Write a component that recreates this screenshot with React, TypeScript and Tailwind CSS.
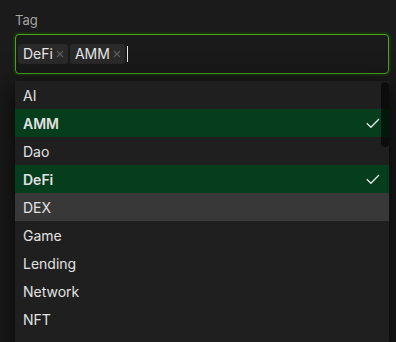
import { useState } from 'react';

const OPTIONS = ['AI', 'AMM', 'Dao', 'DeFi', 'DEX', 'Game', 'Lending', 'Network', 'NFT'];

function CloseIcon() {
  return (
    <svg width="8" height="8" viewBox="0 0 8 8" className="ml-[3px]">
      <path d="M1 1L7 7M7 1L1 7" stroke="#5e5e5e" strokeWidth="1.1" />
    </svg>
  );
}

function CheckIcon() {
  return (
    <svg width="14" height="11" viewBox="0 0 14 11">
      <path d="M0.8 5.2L4.9 9.3L13 1" fill="none" stroke="#e4e4e4" strokeWidth="1.3" />
    </svg>
  );
}

export default function App() {
  const [selected] = useState<string[]>(['DeFi', 'AMM']);
  const active = 'DEX';

  return (
    <div className="h-[342px] w-[396px] overflow-hidden bg-[#1b1b1b] pl-[15px] pr-[7px] pt-[12px] font-['Inter',sans-serif]">
      {/* label */}
      <div className="text-[13px] leading-[16px] text-[#a3a3a3]">Tag</div>

      {/* select input */}
      <div className="mt-[6px] flex h-[40px] items-center gap-[2px] rounded-[4px] border border-[#4ca61f] bg-[#1a1a1a] pl-[2px] shadow-[0_0_0_2px_#1a2e12]">
        {selected.map((tag) => (
          <span
            key={tag}
            className="flex h-[20px] items-center rounded-[3px] bg-[#2a2a2a] pl-[5px] pr-[4px] text-[14px] leading-[20px] text-[#e6e6e6]"
          >
            {tag}
            <CloseIcon />
          </span>
        ))}
        <span className="h-[16px] w-px bg-[#e6e6e6]" />
      </div>

      {/* dropdown */}
      <div className="relative mt-[7px] h-[270px] bg-[#1f1f1f] shadow-[0_6px_16px_0_rgba(0,0,0,0.5),0_9px_28px_8px_rgba(0,0,0,0.3)]">
        {OPTIONS.map((opt) => {
          const isSelected = selected.includes(opt);
          return (
            <div
              key={opt}
              className={
                'flex h-[28px] items-center justify-between pl-[8px] pr-[9px] text-[14px] text-[#e2e2e2] ' +
                (isSelected ? 'bg-[#063d1c] font-semibold' : opt === active ? 'bg-[#383838]' : '')
              }
            >
              <span>{opt}</span>
              {isSelected && <CheckIcon />}
            </div>
          );
        })}
        {/* scrollbar */}
        <div className="absolute right-0 top-[1px] h-[65px] w-[8px] rounded-[4px] bg-black/60" />
      </div>
    </div>
  );
}
